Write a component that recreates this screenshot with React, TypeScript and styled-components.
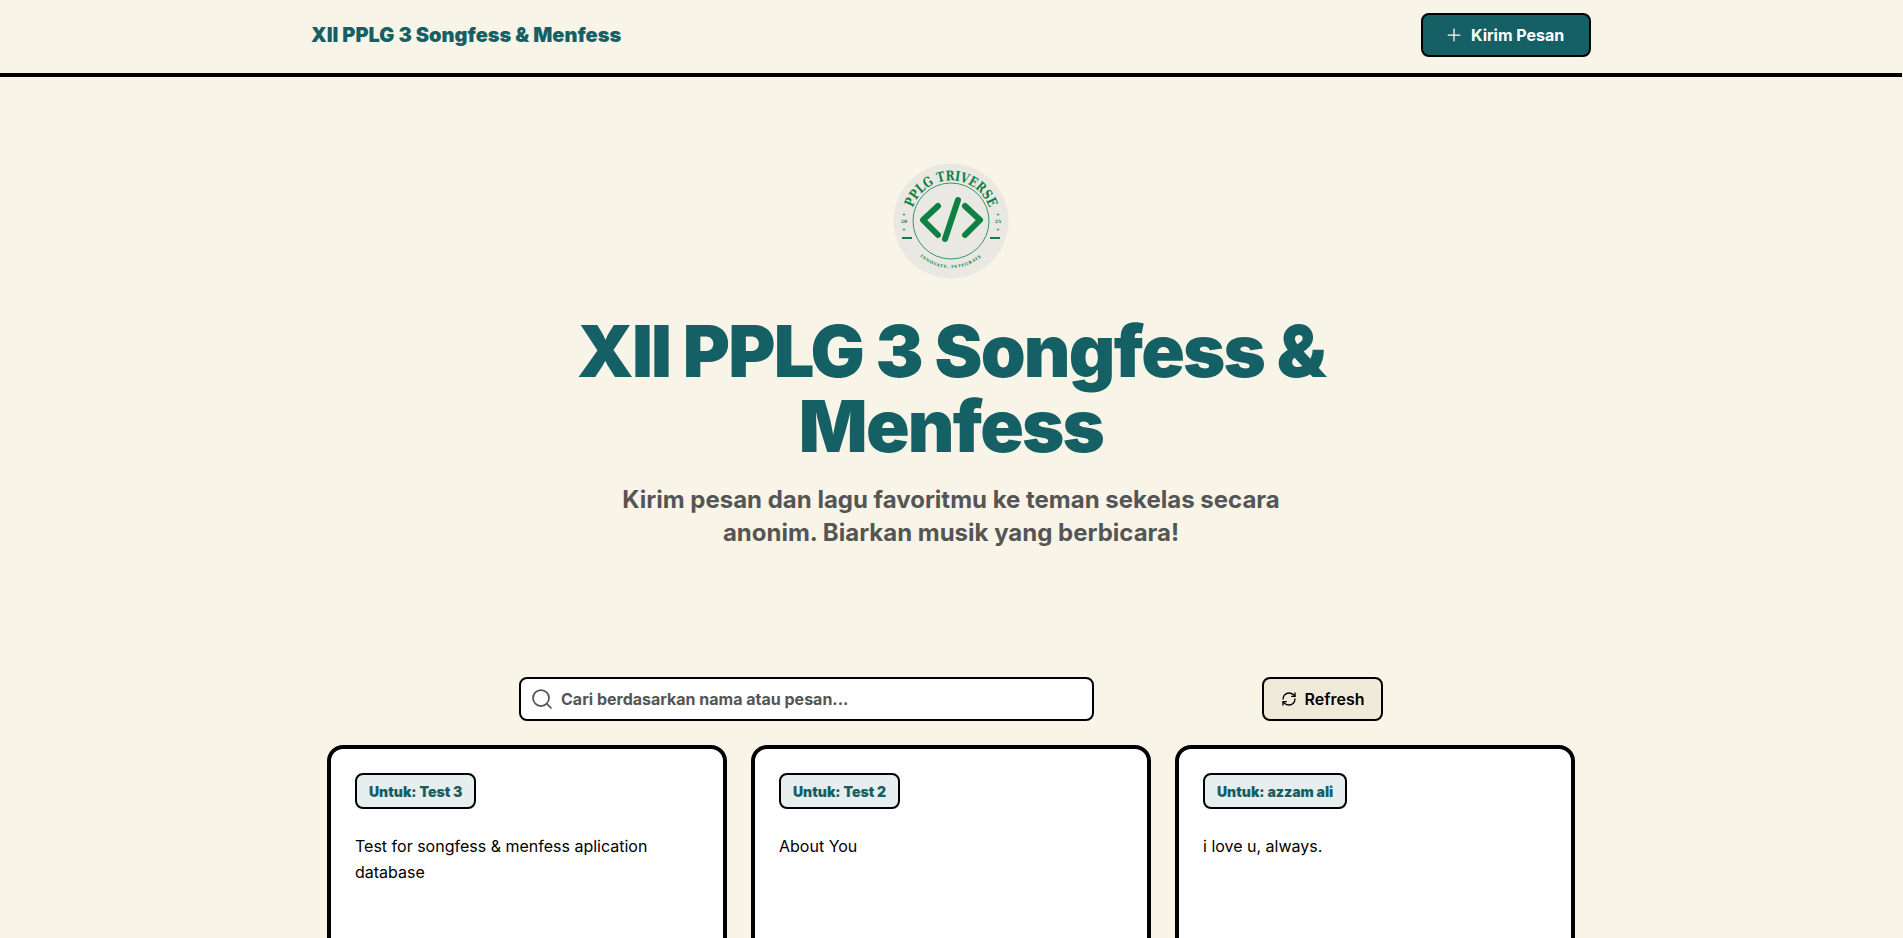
import React from 'react'
import styled, { createGlobalStyle } from 'styled-components'
import { Plus, RefreshCw, Search } from 'lucide-react'

const GlobalStyle = createGlobalStyle`
  html, body {
    margin: 0;
    padding: 0;
    background: #f8f4e7;
    color: #000;
    font-family: Inter, "Liberation Sans", sans-serif;
  }
  * {
    box-sizing: border-box;
  }
`

const Page = styled.div`
  width: 1902px;
`

const Navbar = styled.header`
  border-bottom: 4px solid #000;
`

const NavInner = styled.div`
  width: 1280px;
  height: 73px;
  margin: 0 auto;
  padding: 13px 0 16px;
  display: flex;
  align-items: center;
  justify-content: space-between;
`

const Brand = styled.a`
  font-size: 20px;
  font-weight: 900;
  color: #156064;
`

const SendButton = styled.button`
  width: 170px;
  height: 44px;
  padding: 0 0 0 21px;
  display: flex;
  align-items: center;
  gap: 7px;
  border: 2px solid #000;
  border-radius: 8px;
  background: #156064;
  color: #fff;
  font: 700 16px Inter, sans-serif;
`

const Hero = styled.section`
  display: flex;
  flex-direction: column;
  align-items: center;
  padding-top: 86px;
  text-align: center;
`

const Title = styled.h1`
  width: 896px;
  margin: 34px 0 0;
  font-size: 72px;
  line-height: 75px;
  font-weight: 900;
  letter-spacing: -0.025em;
  color: #156064;
`

const Subtitle = styled.p`
  width: 672px;
  margin: 20px 0 0;
  font-size: 24px;
  line-height: 33px;
  font-weight: 700;
  color: #555;
`

const Toolbar = styled.div`
  width: 864px;
  margin: 128px auto 0;
  display: flex;
  align-items: center;
  justify-content: space-between;
`

const SearchBox = styled.label`
  width: 575px;
  height: 44px;
  display: flex;
  align-items: center;
  gap: 7px;
  padding: 0 9px;
  border: 2px solid #000;
  border-radius: 8px;
  background: #fff;
  color: #555;
  font-size: 16px;
  font-weight: 700;
`

const RefreshButton = styled.button`
  width: 121px;
  height: 44px;
  display: flex;
  align-items: center;
  justify-content: center;
  gap: 8px;
  border: 2px solid #000;
  border-radius: 8px;
  background: #f0eadb;
  color: #000;
  font: 600 16px Inter, sans-serif;
`

const CardGrid = styled.div`
  width: 1248px;
  margin: 24px auto 0;
  display: grid;
  grid-template-columns: repeat(3, 400px);
  gap: 24px;
`

const Card = styled.article`
  min-height: 260px;
  padding: 24px;
  border: 4px solid #000;
  border-radius: 16px;
  background: #fff;
`

const Badge = styled.span`
  display: flex;
  align-items: center;
  width: fit-content;
  height: 36px;
  padding: 0 12px;
  border: 2px solid #000;
  border-radius: 8px;
  background: #e6eef0;
  color: #156064;
  font-size: 14px;
  font-weight: 900;
`

const Message = styled.p`
  margin: 24px 0 0;
  font-size: 16px;
  line-height: 26px;
  color: #000;
`

const Logo = () => (
  <svg width="116" height="116" viewBox="0 0 116 116" aria-label="PPLG Triverse">
    <defs>
      <path id="logo-top" d="M17.5 58 A40.5 40.5 0 0 1 98.5 58" />
      <path id="logo-bottom" d="M11 58 A47 47 0 0 0 105 58" />
    </defs>
    <circle cx="58" cy="58" r="57.5" fill="#e9e8e3" />
    <circle cx="58" cy="58" r="38" fill="none" stroke="#0f8043" strokeWidth="0.8" />
    <text fill="#0f8043" fontFamily="DejaVu Serif" fontWeight="700" fontSize="13.5">
      <textPath
        href="#logo-top"
        startOffset="13.5"
        textLength="100"
        lengthAdjust="spacingAndGlyphs"
      >
        PPLG TRIVERSE
      </textPath>
    </text>
    <text fill="#0f8043" fontFamily="DejaVu Serif" fontWeight="700" fontSize="4" letterSpacing="0.7">
      <textPath href="#logo-bottom" startOffset="50%" textAnchor="middle">INNOVATE, INTEGRATE</textPath>
    </text>
    <g fill="none" stroke="#0f8043" strokeWidth="6" strokeLinecap="round" strokeLinejoin="round">
      <path d="M45 43 L30 57 L45 72" />
      <path d="M72 43 L87 57 L72 72" />
      <path d="M65 37 L52 76" />
    </g>
    <g fill="#0f8043" fontFamily="DejaVu Serif" fontWeight="700" fontSize="4.5" textAnchor="middle">
      <text x="11" y="60">20</text>
      <text x="105" y="60">25</text>
      <text x="11" y="53">+</text>
      <text x="11" y="67.5">+</text>
      <text x="105" y="53">+</text>
      <text x="105" y="67.5">+</text>
    </g>
    <rect x="9" y="74" width="10" height="2" fill="#0f8043" />
    <rect x="97" y="74" width="10" height="2" fill="#0f8043" />
  </svg>
)

const messages = [
  { to: 'Test 3', body: 'Test for songfess & menfess aplication database' },
  { to: 'Test 2', body: 'About You' },
  { to: 'azzam ali', body: 'i love u, always.' }
]

const App: React.FC = () => (
  <Page>
    <GlobalStyle />
    <Navbar>
      <NavInner>
        <Brand>XII PPLG 3 Songfess &amp; Menfess</Brand>
        <SendButton>
          <Plus size={20} strokeWidth={1.5} />
          Kirim Pesan
        </SendButton>
      </NavInner>
    </Navbar>
    <Hero>
      <Logo />
      <Title>XII PPLG 3 Songfess &amp; Menfess</Title>
      <Subtitle>Kirim pesan dan lagu favoritmu ke teman sekelas secara anonim. Biarkan musik yang berbicara!</Subtitle>
    </Hero>
    <Toolbar>
      <SearchBox>
        <Search size={24} strokeWidth={1.75} />
        Cari berdasarkan nama atau pesan...
      </SearchBox>
      <RefreshButton>
        <RefreshCw size={16} strokeWidth={2} />
        Refresh
      </RefreshButton>
    </Toolbar>
    <CardGrid>
      {messages.map(message => (
        <Card key={message.to}>
          <Badge>Untuk: {message.to}</Badge>
          <Message>{message.body}</Message>
        </Card>
      ))}
    </CardGrid>
  </Page>
)

export default App
